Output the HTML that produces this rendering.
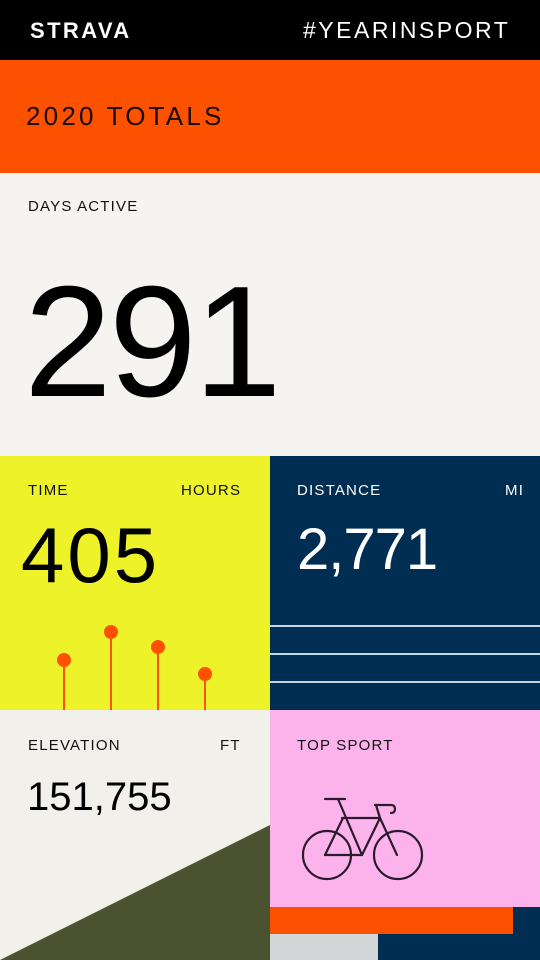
<!DOCTYPE html>
<html><head><meta charset="utf-8"><style>
*{margin:0;padding:0;box-sizing:border-box}
body{width:540px;height:960px;overflow:hidden;font-family:"Liberation Sans",sans-serif;position:relative;background:#f5f4f0}
div{position:absolute}
.l{font-size:15px;letter-spacing:1.2px}
</style></head><body>
<div style="left:0;top:0;width:540px;height:60px;background:#000"></div>
<div style="left:30px;top:18px;color:#fff;font-weight:bold;font-size:22px;letter-spacing:2.4px">STRAVA</div>
<div style="left:303px;top:17px;color:#fff;font-size:23px;letter-spacing:2.5px">#YEARINSPORT</div>
<div style="left:0;top:60px;width:540px;height:113px;background:#fc5200"></div>
<div style="left:26px;top:101px;color:#1a0a00;font-size:26px;letter-spacing:3.2px">2020 TOTALS</div>
<div style="left:0;top:173px;width:540px;height:283px;background:#f5f4f0"></div>
<div class="l" style="left:28px;top:198px;color:#111">DAYS ACTIVE</div>
<div style="left:24px;top:262px;font-size:158px;line-height:160px;color:#000;letter-spacing:-3px">291</div>
<div style="left:0;top:456px;width:270px;height:254px;background:#eef228"></div>
<div class="l" style="left:28px;top:482px;color:#111">TIME</div>
<div class="l" style="left:181px;top:482px;color:#111">HOURS</div>
<div style="left:21px;top:512px;font-size:78px;line-height:86px;color:#000;letter-spacing:3px">405</div>
<svg style="position:absolute;left:0;top:456px" width="270" height="254">
<g stroke="#fc5200" stroke-width="2" fill="#fc5200">
<line x1="64" y1="204" x2="64" y2="254"/><circle cx="64" cy="204" r="6"/>
<line x1="111" y1="176" x2="111" y2="254"/><circle cx="111" cy="176" r="6"/>
<line x1="158" y1="191" x2="158" y2="254"/><circle cx="158" cy="191" r="6"/>
<line x1="205" y1="218" x2="205" y2="254"/><circle cx="205" cy="218" r="6"/>
</g></svg>
<div style="left:270px;top:456px;width:270px;height:254px;background:#002d52"></div>
<div class="l" style="left:297px;top:482px;color:#fff">DISTANCE</div>
<div class="l" style="left:505px;top:482px;color:#fff">MI</div>
<div style="left:297px;top:518px;font-size:58px;line-height:64px;color:#fff;letter-spacing:-1px">2,771</div>
<div style="left:270px;top:625px;width:270px;height:2px;background:#c8d4e0"></div>
<div style="left:270px;top:653px;width:270px;height:2px;background:#c8d4e0"></div>
<div style="left:270px;top:681px;width:270px;height:2px;background:#c8d4e0"></div>
<div style="left:0;top:710px;width:270px;height:250px;background:#f1f0eb"></div>
<svg style="position:absolute;left:0;top:710px" width="270" height="250"><polygon points="0,250 270,115 270,250" fill="#4a5230"/></svg>
<div class="l" style="left:28px;top:737px;color:#111">ELEVATION</div>
<div class="l" style="left:220px;top:737px;color:#111">FT</div>
<div style="left:27px;top:774px;font-size:40px;line-height:46px;color:#000;letter-spacing:0px">151,755</div>
<div style="left:270px;top:710px;width:270px;height:250px;background:#fcb3ec"></div>
<div class="l" style="left:297px;top:737px;color:#111">TOP SPORT</div>
<svg style="position:absolute;left:0;top:0" width="540" height="960"><g fill="none" stroke="#2a1a2e" stroke-width="2.2" stroke-linecap="round" stroke-linejoin="round">
<circle cx="327" cy="855" r="24"/><circle cx="398" cy="855" r="24"/>
<line x1="325" y1="799" x2="345" y2="799"/>
<line x1="338" y1="799" x2="362" y2="855"/>
<line x1="343" y1="818" x2="325" y2="855"/>
<line x1="325" y1="855" x2="362" y2="855"/>
<line x1="342" y1="818" x2="380" y2="818"/>
<line x1="380" y1="818" x2="362" y2="855"/>
<line x1="380" y1="818" x2="376" y2="805"/>
<path d="M375 805 H391 Q395 805 395 809 Q395 813 391 813"/>
<line x1="380" y1="818" x2="397" y2="855"/>
</g></svg>
<div style="left:270px;top:907px;width:243px;height:27px;background:#fc5200"></div>
<div style="left:513px;top:907px;width:27px;height:27px;background:#002d52"></div>
<div style="left:270px;top:934px;width:108px;height:26px;background:#d2d6d6"></div>
<div style="left:378px;top:934px;width:162px;height:26px;background:#002d52"></div>
</body></html>
